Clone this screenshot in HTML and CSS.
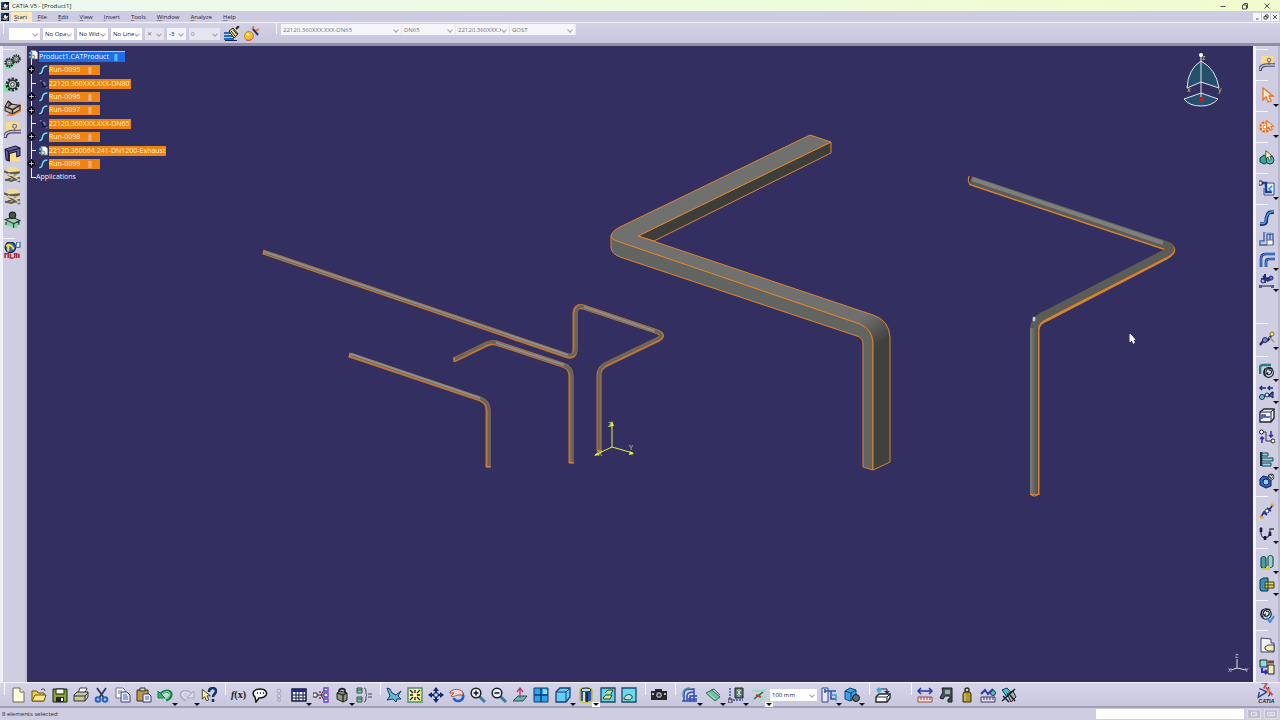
FILE: index.html
```html
<!DOCTYPE html>
<html lang="en">
<head>
<meta charset="utf-8">
<title>CATIA V5 - [Product1]</title>
<link rel="stylesheet" href="styles.css">
</head>
<body>
<svg class="defs" aria-hidden="true">
  <defs>
    <symbol id="app" viewBox="0 0 16 16"><path d="M0 0h16v16H0z" fill="#10162a"/><path d="M0 0h7L3 6v8H0z" fill="#1d4f78"/><path d="M5 6l4-3 2 4 4-2-3 6-4 1z" fill="#e8f3f8"/><path d="M3 10l5 0 3 4H5z" fill="#e08a2c"/><path d="M9 12l5-1v4h-4z" fill="#3a75b0"/></symbol>
    <symbol id="gear" viewBox="0 0 16 16"><circle cx="8" cy="8" r="6" fill="none" stroke="#26332f" stroke-width="3" stroke-dasharray="2.500 1.300"/><circle cx="8" cy="8" r="4.600" fill="#b9c8c4" stroke="#26332f" stroke-width="1.500"/><circle cx="8" cy="8" r="2" fill="#e9eef2" stroke="#26332f"/></symbol>
    <symbol id="run" viewBox="0 0 16 16"><path d="M2 14c7 1 4-5 6-8 1-4 3-4 7-4" fill="none" stroke="#0d3b63" stroke-width="4"/><path d="M2 13.500c6 1 4-5 6-8 1-3 3-4 7-4" fill="none" stroke="#7fd4ee" stroke-width="2.400"/></symbol>
    <symbol id="part" viewBox="0 0 16 16"><path d="M5 1h7l3 3v10H5z" fill="#fff" stroke="#9fb6d6"/><circle cx="4" cy="5" r="2.500" fill="#5fb2ea" stroke="#1b4b8f"/><circle cx="8" cy="11" r="3" fill="#efe27a" stroke="#1b4b8f"/><circle cx="3" cy="11" r="1.500" fill="#7ac7ef"/></symbol>
    <symbol id="spec" viewBox="0 0 16 16"><path d="M3 3h3M8 6h3v4M12 14h3" fill="none" stroke="#8fa0e8" stroke-width="1.600"/><path d="M5 4l3 8 5 1" fill="none" stroke="#14123c" stroke-width="2"/></symbol>
    <symbol id="node" viewBox="0 0 16 16"><path d="M8 1l7 7-7 7-7-7z" fill="#0b0b12" stroke="#0b0b12" stroke-width="2" stroke-linejoin="round"/><path d="M8 4v8M4 8h8" stroke="#e6e6f0" stroke-width="1.400"/><path d="M15 8h1" stroke="#fff"/></symbol>
    <symbol id="conveyor" viewBox="0 0 16 16"><circle cx="8" cy="6" r="6.500" fill="#f5dc8e"/><path d="M0 4l5 2 10-1M1 12l6 1 8-3M2 6l13 8M14 5L2 13" fill="none" stroke="#5f5f57" stroke-width="2"/><path d="M0 6l6 2 9-1M2 14l6 1 7-3M4 6l10 6" fill="none" stroke="#d6d6cc"/></symbol>
    <symbol id="pipebend" viewBox="0 0 16 16"><path d="M2 0h12v9H2z" fill="#f9dc85"/><path d="M1 15c0-4 3-6 7-6h8" fill="none" stroke="#4f4a6c" stroke-width="3.600"/><path d="M1 14c0-3 3-5 7-5h8" fill="none" stroke="#c2c4dc" stroke-width="1.500"/><circle cx="10" cy="4" r="1.800" fill="#ddd6e8" stroke="#6c6280"/><path d="M10 6v3" stroke="#6c6280"/></symbol>
    <symbol id="swirl" viewBox="0 0 16 16"><circle cx="8" cy="8" r="6" fill="#d8e4ea" stroke="#161a28" stroke-width="1.300"/><path d="M8 5c4-1 5 3 2 5s-6-1-5-4 5-4 8-3M8 8c-2 0-2 3 1 3M4 3c-2 3-1 7 1 9" fill="none" stroke="#161a28" stroke-width="1.300"/></symbol>
    <symbol id="disk" viewBox="0 0 16 16"><path d="M1 2h14v13H1z" fill="#8aa33d" stroke="#1a2010"/><path d="M4 2h8v5H4z" fill="#f3f5ea" stroke="#1a2010"/><path d="M4 10h8v5H4z" fill="#20261a"/><path d="M9 11h2v3H9z" fill="#fff"/></symbol>
    <symbol id="arrow" viewBox="0 0 16 16"><path d="M4 1v12l3-3 2 5 3-1-2-5h4z"/></symbol>
  </defs>
</svg>

<div class="window">
<header class="titlebar">
  <svg class="appicon"><use href="#app"/></svg>
  <h1 class="title">CATIA V5 - [Product1]</h1>
  <div class="wincontrols">
    <button aria-label="Minimize"><svg viewBox="0 0 8 8"><path d="M1.500 4.500h5"/></svg></button>
    <button aria-label="Restore"><svg viewBox="0 0 8 8"><path d="M1.500 3h4v4h-4zM3 3V1.500h3.500V6H5.500"/></svg></button>
    <button aria-label="Close"><svg viewBox="0 0 8 8"><path d="M1.500 1.500l5 5M6.500 1.500l-5 5"/></svg></button>
  </div>
</header>

<nav class="menubar" aria-label="Main menu">
  <svg class="appicon"><use href="#app"/></svg>
  <button class="menu active"><u>S</u>tart</button>
  <button class="menu"><u>F</u>ile</button>
  <button class="menu"><u>E</u>dit</button>
  <button class="menu"><u>V</u>iew</button>
  <button class="menu"><u>I</u>nsert</button>
  <button class="menu"><u>T</u>ools</button>
  <button class="menu"><u>W</u>indow</button>
  <button class="menu"><u>A</u>nalyze</button>
  <button class="menu"><u>H</u>elp</button>
  <div class="childcontrols">
    <button aria-label="Minimize document"><svg viewBox="0 0 8 8"><path d="M3 6h2.500"/></svg></button>
    <button aria-label="Restore document"><svg viewBox="0 0 8 8"><path d="M2 3.500h3V6H2zM3.500 3.500V2H6v3H5"/></svg></button>
    <button aria-label="Close document"><svg viewBox="0 0 8 8"><path d="M2 2l4 4M6 2L2 6"/></svg></button>
  </div>
</nav>

<div class="optionbar" role="toolbar" aria-label="Graphic properties">
  <div class="set">
    <span class="combo"><select aria-label="Fill color"><option></option></select></span>
    <span class="combo"><select aria-label="Opacity"><option>No Opa</option></select></span>
    <span class="combo"><select aria-label="Line width"><option>No Wid</option></select></span>
    <span class="combo"><select aria-label="Line type"><option>No Line</option></select></span>
    <span class="combo small off"><select aria-label="Point symbol"><option>✕</option></select></span>
    <span class="combo small tint"><select aria-label="Rendering style"><option>-3</option></select></span>
    <span class="combo off"><select aria-label="Layer"><option>0</option></select></span>
    <button class="tool wide" aria-label="Painter"><svg viewBox="0 0 16 16"><path d="M0 7h9M0 10h9M0 13h10" stroke="#2167c9" stroke-width="2"/><path d="M1 14.500h12" stroke="#15205a"/><path d="M5 5l4-3 5 6-4 4z" fill="#e9e28a" stroke="#27270f"/><path d="M7 5l4 5M9 3.500l4 5" stroke="#27270f"/><path d="M12 3l3-3" stroke="#27270f" stroke-width="2"/></svg></button>
    <button class="tool wide" aria-label="Wizard"><svg viewBox="0 0 16 16"><circle cx="5" cy="10" r="4.500" fill="#f4c12c" stroke="#c9831d"/><circle cx="4" cy="8.500" r="1.500" fill="#fff2a0"/><path d="M2 14c3 1 5 0 7-2" stroke="#cc4e9b" fill="none"/><path d="M8 3l2-3M11 5l4-2" stroke="#e07a2a" stroke-width="1.500"/><path d="M9 3l5 6" stroke="#26306a" stroke-width="2"/></svg></button>
  </div>
  <div class="set spec">
    <span class="combo w120 off"><select aria-label="Specification"><option>22120.360XXX.XXX-DN65</option></select></span>
    <span class="combo w54 off"><select aria-label="Nominal size"><option>DN65</option></select></span>
    <span class="combo w54 off"><select aria-label="Line ID"><option>22120.360XXX.X(</option></select></span>
    <span class="combo w66 off"><select aria-label="Standard"><option>GOST</option></select></span>
  </div>
</div>

<div class="work">
<aside class="side left" role="toolbar" aria-label="Workshop">
  <div class="vgroup">
    <button class="tool" aria-label="Components"><svg viewBox="0 0 16 16"><path d="M0 15l7-7 8 0-9 7z" fill="#8fdcb0"/><use href="#gear" x="0" y="4" width="10" height="10"/><use href="#gear" x="7" y="1" width="9" height="9"/></svg></button>
    <button class="tool" aria-label="Mechanism"><svg viewBox="0 0 16 16"><path d="M0 15V7l14 1-8 7z" fill="#8fdcb0"/><use href="#gear" x="1" y="1" width="14" height="14"/></svg></button>
    <button class="tool" aria-label="Assembly"><svg viewBox="0 0 16 16"><path d="M8 10l8-6v8l-8 4H2z" fill="#e98a3c"/><path d="M1 7l3-5 4 3 7 1v4l-7 4-7-3z" fill="#c8beb2" stroke="#2b241f"/><path d="M1 7l7 3 7-4M8 10v4" fill="none" stroke="#2b241f" stroke-width="1.500"/><path d="M4 2l3 3-3 2" fill="#7a6d62" stroke="#2b241f"/></svg></button>
    <button class="tool" aria-label="Piping"><svg><use href="#pipebend"/></svg></button>
    <button class="tool short" aria-label="Duct"><svg viewBox="0 0 16 16"><path d="M3 7h12v8H3z" fill="#f7dc8a"/><path d="M1 4l10-3 4 2v7l-3 1V6L5 8v7l-3-1z" fill="#6a68a0" stroke="#16163a"/><path d="M1 4l3 2 11-3M4 6v9" fill="none" stroke="#16163a"/></svg></button>
    <button class="tool short" aria-label="Conveyor"><svg><use href="#conveyor"/></svg></button>
    <button class="tool short" aria-label="Tray"><svg><use href="#conveyor"/></svg></button>
    <button class="tool short" aria-label="Equipment"><svg viewBox="0 0 16 16"><path d="M0 13l4-7 12 3-4 7z" fill="#7fd3a8"/><path d="M1 8l7-2 7 3-6 3zM2 10v3M14 10v3M9 12v4" fill="#a8c6b6" stroke="#26382f"/><circle cx="8" cy="4" r="3" fill="#48524d" stroke="#1b211e"/></svg></button>
  </div>
  <div class="vgroup">
    <button class="tool" aria-label="Catalog"><svg viewBox="0 0 16 16"><circle cx="6" cy="5" r="5" fill="#2d5fd0" stroke="#10163a"/><path d="M2 4c3-3 6 0 7 3M4 9V3" fill="none" stroke="#f0dc3c" stroke-width="2"/><path d="M12 0h3v5h-4z" fill="#fff" stroke="#2b4bb0"/><path d="M1 15v-4h3v4m2-4v4h3m1 0v-4h2v4m2 0v-4" fill="none" stroke="#b82b3a" stroke-width="1.500"/></svg></button>
  </div>
</aside>

<main class="viewport">
  <svg class="scene" viewBox="27 46 1226 636" role="img" aria-label="Pipe and duct runs in 3D">
    <defs>
      <linearGradient id="bend" gradientUnits="userSpaceOnUse" x1="866" y1="314" x2="884" y2="341"><stop offset="0" stop-color="#70706e"/><stop offset=".3" stop-color="#646563"/><stop offset="1" stop-color="#40413d"/></linearGradient>
      <linearGradient id="tube" gradientUnits="userSpaceOnUse" x1="1030" y1="0" x2="1039" y2="0"><stop offset="0" stop-color="#7b7f7c"/><stop offset=".4" stop-color="#666865"/><stop offset="1" stop-color="#4b4c46"/></linearGradient>
    </defs>
    <g class="duct">
      <path d="M831 142V153L654 241L638 236Z" fill="#3d3e3a"/>
      <path d="M611 236V248Q612 254 620 257L857 336Q863 338 863 344V467L873 470V342Q872 329 860 324L617 241Q611 239 611 236Z" fill="#626461"/>
      <path d="M810 135L831 142L638 236L873 315Q889 320 890 337V462L873 470V342Q872 329 860 324L617 241Q611 239 611 236Q612 231 620 227Z" fill="url(#bend)"/>
    </g>
    <g class="pipe">
      <path class="rim" d="M263 252L568 356Q575 357 575 350V313Q576 305 583 307L655 331Q667 335 657 340L605 365Q599 369 599 375V451"/>
      <path class="rim" d="M349 355L480 399Q488 402 488 410V467"/>
      <path class="rim" d="M454 360L487 344Q491 342 496 343L563 365Q571 368 571 376V463"/>
      <path class="shell" d="M264 252L568 355Q575 356 576 350V313Q577 305 583 307L655 331Q666 335 657 339L605 364Q599 368 599 375V450"/>
      <path class="shell" d="M350 354L480 398Q488 401 489 410V466"/>
      <path class="shell" d="M455 359L487 343Q491 341 496 343L563 365Q571 368 572 376V462"/>
      <path class="shine" d="M265 252L568 355M584 307L655 331M351 354L480 398M496 343L564 365"/>
      <path class="cap" d="M264 250v4M350 353v4M454 358v4M486 467h5M569 463h5M597 451h5"/>
    </g>
    <g class="mainpipe">
      <path class="rim" d="M971 181L1163 245Q1178 249 1164 256L1046 317Q1035 321 1035 330V495"/>
      <path class="shell" d="M971 180L1163 244Q1177 248 1164 254L1045 315Q1034 320 1034 329V494"/>
      <path d="M1030 328H1038V494H1030Z" fill="url(#tube)"/>
      <path class="shine" d="M972 179L1163 243"/>
      <ellipse class="glint" cx="1034" cy="319" rx="1.500" ry="2.500"/>
      <path class="cap" d="M969 176Q967 181 970 185M1030 494Q1034 498 1039 494"/>
    </g>
    <g class="origin">
      <path d="M612 447V424M612 447L633 453M612 447L595 455"/>
      <path class="tip" d="M612 421l2 5h-4zM634 454l-5 1 1-4zM594 456l4-4 1 3z"/>
      <text x="608" y="427">Z</text><text x="629" y="450">Y</text><text x="598" y="456">X</text>
    </g>
    <g class="compass">
      <path d="M1201 61Q1188 69 1187 88L1201 82L1219 88Q1216 69 1201 61Z"/>
      <path d="M1184 99L1201 93L1218 99Q1212 106 1201 106Q1189 106 1184 99Z"/>
      <path d="M1201 56V99"/>
      <circle cx="1201" cy="55" r="2"/>
      <rect x="1199" y="97" width="5" height="5"/>
      <text x="1202" y="60">z</text><text x="1187" y="92">x</text><text x="1218" y="92">y</text>
    </g>
    <g class="triad">
      <path d="M1237 659V668L1231 670M1237 668L1246 670"/>
      <text x="1235" y="658">Z</text><text x="1228" y="672">X</text><text x="1245" y="672">Y</text>
    </g>
    <path class="pointer" d="M1130 334v8l2-2 1.500 3.500 1-1-1.500-3h2z"/>
  </svg>
  <ul class="tree">
    <li class="root"><svg><use href="#part"/></svg><span class="label picked">Product1.CATProduct<i>||</i></span></li>
    <li class="run"><svg class="node"><use href="#node"/></svg><svg><use href="#run"/></svg><span class="label">Run-0095<i>||</i></span></li>
    <li><svg><use href="#spec"/></svg><span class="label">22120.360XXX.XXX-DN80</span></li>
    <li class="run"><svg class="node"><use href="#node"/></svg><svg><use href="#run"/></svg><span class="label">Run-0096<i>||</i></span></li>
    <li class="run"><svg class="node"><use href="#node"/></svg><svg><use href="#run"/></svg><span class="label">Run-0097<i>||</i></span></li>
    <li><svg><use href="#spec"/></svg><span class="label">22120.360XXX.XXX-DN65</span></li>
    <li class="run"><svg class="node"><use href="#node"/></svg><svg><use href="#run"/></svg><span class="label">Run-0098<i>||</i></span></li>
    <li><svg><use href="#part"/></svg><span class="label">22120.360064.241-DN1200-Exhaust</span></li>
    <li class="run"><svg class="node"><use href="#node"/></svg><svg><use href="#run"/></svg><span class="label">Run-0099<i>||</i></span></li>
    <li class="apps"><span>Applications</span></li>
  </ul>
</main>

<aside class="side right" role="toolbar" aria-label="Piping design">
  <div class="vgroup"><button class="tool" aria-label="Piping Design"><svg><use href="#pipebend"/></svg></button></div>
  <div class="vgroup"><button class="tool more" aria-label="Select"><svg viewBox="0 0 16 16"><use href="#arrow" fill="#fbe7d2" stroke="#e2762b" stroke-width="1.300"/></svg></button></div>
  <div class="vgroup"><button class="tool more" aria-label="Select filter"><svg viewBox="0 0 16 16"><circle cx="6" cy="9" r="4.500" fill="#fbe7d2" stroke="#e2762b" stroke-width="2.500" stroke-dasharray="2.500 1"/><circle cx="6" cy="9" r="2" fill="#fff" stroke="#e2762b"/><use href="#arrow" x="5" y="1" width="11" height="13" fill="#fbe7d2" stroke="#e2762b" stroke-width="1.500"/></svg></button></div>
  <div class="vgroup"><button class="tool" aria-label="Pick object"><svg viewBox="0 0 16 16"><path d="M1 9l4-3 4 2v5l-4 2-4-2z" fill="#35a7a0" stroke="#143c3c"/><circle cx="11" cy="11" r="4" fill="#4fc0b8" stroke="#143c3c"/><use href="#arrow" x="4" y="0" width="11" height="13" fill="#f5f0b8" stroke="#222"/></svg></button></div>
  <div class="vgroup"><button class="tool more" aria-label="Route"><svg viewBox="0 0 16 16"><path d="M8 3h7v12H5V8" fill="#e9effa" stroke="#3a4b86"/><path d="M1 3h6v9h6" fill="none" stroke="#173f9c" stroke-width="2.500"/><path d="M0 1h3v4H0z" fill="#fff" stroke="#222"/><path d="M13 6l-3 3 3 3" fill="none" stroke="#2b8fd2" stroke-width="1.500"/></svg></button></div>
  <div class="vgroup gapafter">
    <button class="tool" aria-label="Route a run"><svg viewBox="0 0 16 16"><path d="M1 14c9 1 5-4 7-8 1-4 3-4 7-4" fill="none" stroke="#0c2a78" stroke-width="3.600"/><path d="M1 13.500c8 1 5-4 7-8 1-3 3-4 7-4" fill="none" stroke="#49a2ee" stroke-width="1.500"/></svg></button>
    <button class="tool" aria-label="Route from element"><svg viewBox="0 0 16 16"><path d="M5 1v9H1v4h7M8 3h6v11M8 3v7M11 3v6" fill="none" stroke="#3d5da8" stroke-width="1.400"/><path d="M8 9h6v5H8z" fill="#fff" stroke="#5e6b80"/><path d="M1 11h4M6 2h8" stroke="#74b9d8"/></svg></button>
    <button class="tool more" aria-label="Offset run"><svg viewBox="0 0 16 16"><path d="M2 15V7c0-4 2-5 5-5h9" fill="none" stroke="#102c86" stroke-width="2.600"/><path d="M7 15v-5c0-2 1-3 3-3h6" fill="none" stroke="#102c86" stroke-width="2.600"/><path d="M2 15V7c0-4 2-5 5-5h9M7 15v-5c0-2 1-3 3-3h6" fill="none" stroke="#59b1f0"/></svg></button>
    <button class="tool more" aria-label="Branch"><svg viewBox="0 0 16 16"><path d="M6 1v9M2 6l9-1M4 3l5 5M8 8l4-2" stroke="#222a70" stroke-width="2"/><circle cx="12" cy="5" r="2" fill="#5c77d8" stroke="#222a70"/><circle cx="4" cy="8" r="2" fill="#9fb2f2" stroke="#222a70"/><path d="M1 13h13" stroke="#1c2038"/><path d="M0 12h3v3H0zM12 12h3v3h-3z" fill="#4a58b0"/></svg></button>
  </div>
  <div class="vgroup single"><button class="tool more" aria-label="Place part"><svg viewBox="0 0 16 16"><path d="M1 14l4-5h4l3-4" fill="none" stroke="#222a54" stroke-width="2.400"/><circle cx="6" cy="9" r="2.500" fill="#7688d8" stroke="#222a54"/><circle cx="13" cy="3" r="2" fill="#f2e582" stroke="#77733a"/><path d="M10 6l5 5" stroke="#a1a05d" stroke-width="1.500"/></svg></button></div>
  <div class="vgroup">
    <button class="tool more" aria-label="Rotate"><svg viewBox="0 0 16 16"><path d="M1 11V5c0-3 2-3 4-3h7" fill="none" stroke="#267c84" stroke-width="2.600"/><use href="#swirl" x="3" y="3" width="13" height="13"/></svg></button>
    <button class="tool more" aria-label="Align"><svg viewBox="0 0 16 16"><path d="M1 3h6M3 1L1 3l2 2M9 3h5M11 1L9 3l2 2" fill="none" stroke="#182c80" stroke-width="1.400"/><path d="M2 13l5-3 3 1 4-4" fill="none" stroke="#173058" stroke-width="2"/><circle cx="3" cy="12" r="2.500" fill="#6cc4d8" stroke="#173058"/><circle cx="8" cy="10" r="2" fill="#dbe3ff" stroke="#173058"/><path d="M10 10l4-3v6z" fill="#4b64d0" stroke="#15194a"/></svg></button>
    <button class="tool" aria-label="Group box"><svg viewBox="0 0 16 16"><path d="M1 5l4-3h10v9l-3 4H1z" fill="#f4f5fa" stroke="#23263c" stroke-width="1.400"/><path d="M1 5h11v10M12 5l3-3" fill="none" stroke="#23263c"/><path d="M3 12V8h3v2H4M7 10h4" fill="none" stroke="#2c48b4" stroke-width="1.600"/></svg></button>
    <button class="tool" aria-label="Connect"><svg viewBox="0 0 16 16"><path d="M4 3h3v9h5" fill="none" stroke="#30343f"/><circle cx="2.500" cy="3" r="2" fill="#fff" stroke="#222"/><circle cx="14" cy="12" r="2" fill="#fff" stroke="#222"/><path d="M3 14V8M1 10l2-2 2 2M12 2v6M10 6l2 2 2-2" fill="none" stroke="#3328c2" stroke-width="1.500"/></svg></button>
    <button class="tool more" aria-label="Report"><svg viewBox="0 0 16 16"><path d="M2 1v14" stroke="#222c3a" stroke-width="2"/><path d="M3 2h6v3H3zM3 7h11v3H3zM3 12h9v3H3z" fill="#8adbe0" stroke="#1c3e50"/></svg></button>
    <button class="tool more" aria-label="Snapshot"><svg viewBox="0 0 16 16"><path d="M1 6l3-3 8 2v8l-5 2-6-3z" fill="#2c65c8" stroke="#131d50"/><circle cx="7" cy="9" r="3" fill="#8fd0ee" stroke="#131d50"/><use href="#swirl" x="8" y="0" width="8" height="8"/></svg></button>
  </div>
  <div class="vgroup">
    <button class="tool" aria-label="Curve"><svg viewBox="0 0 16 16"><path d="M2 14l3-5 5-2 4-5" fill="none" stroke="#1c2460" stroke-width="1.500"/><path d="M1 13l3 2M12 1l3 2" stroke="#d8a92c" stroke-width="2.400"/><path d="M4 9l4 3M8 5l4 3" stroke="#26328c" stroke-width="1.600"/><circle cx="8" cy="8" r="2" fill="#fff" stroke="#26328c"/></svg></button>
    <button class="tool more" aria-label="Flexible"><svg viewBox="0 0 16 16"><path d="M2 2v6c0 3 2 5 4 5s4-2 5-5V4h4" fill="none" stroke="#3b4460" stroke-width="1.300"/><path d="M2 3v4M6 11v4M11 7v4" stroke="#151a3c" stroke-width="2.600"/></svg></button>
  </div>
  <div class="vgroup">
    <button class="tool more" aria-label="Vessels"><svg viewBox="0 0 16 16"><path d="M2 3c1-2 4-2 5 0v9c-1 2-4 2-5 0z" fill="#3ea3ad" stroke="#12343c"/><path d="M9 2c1-2 4-2 5 0v9c-1 2-4 2-5 0z" fill="#9ad2ca" stroke="#12343c"/><path d="M2 14h8v-3" fill="none" stroke="#d6c83c" stroke-width="2"/></svg></button>
    <button class="tool more" aria-label="Fittings"><svg viewBox="0 0 16 16"><path d="M1 3l3-2h5v13H2L1 12z" fill="#358fc0" stroke="#12343c"/><path d="M6 5h9v6H6z" fill="#e5d94c" stroke="#3a3a14"/><path d="M6 8h9M9 5v6" stroke="#3a3a14"/></svg></button>
  </div>
  <div class="vgroup"><button class="tool" aria-label="Update"><svg viewBox="0 0 16 16"><use href="#swirl" x="0" y="0" width="14" height="14"/><path d="M8 11l3 4 4-6" fill="none" stroke="#3a8de0" stroke-width="2"/></svg></button></div>
  <div class="vgroup">
    <button class="tool" aria-label="Document note"><svg viewBox="0 0 16 16"><path d="M2 1l10 1v4h3v9H2z" fill="#f1f2f8" stroke="#43475a"/><path d="M6 10l3-2h6v6H9l-3-2z" fill="#f6ecae" stroke="#43475a"/></svg></button>
    <button class="tool" aria-label="Replace"><svg viewBox="0 0 16 16"><path d="M1 1h7v7H1z" fill="#8adbe0" stroke="#222"/><path d="M9 6h6v9H9z" fill="#f3ecb6" stroke="#222"/><path d="M9 3h6" stroke="#8c3b3b" stroke-width="3"/><path d="M3 9v4h5M6 11l2 2-2 2" fill="none" stroke="#2a2ac8" stroke-width="2"/></svg></button>
  </div>
</aside>
</div>

<div class="toolbar" role="toolbar" aria-label="Standard">
  <div class="group narrow">
    <button class="tool" aria-label="New"><svg viewBox="0 0 16 16"><path d="M3 1h7l4 4v10H3z" fill="#ffffe0" stroke="#6a6a55"/><path d="M10 1v4h4" fill="#fff" stroke="#6a6a55"/></svg></button>
    <button class="tool" aria-label="Open"><svg viewBox="0 0 16 16"><path d="M1 14V4h5l1 2h6v8z" fill="#f2cf48" stroke="#6b5412"/><path d="M1 14l3-6h11l-2 6z" fill="#fbe988" stroke="#6b5412"/><path d="M10 3c2-2 4-1 4 1" fill="none" stroke="#3a3416"/></svg></button>
    <button class="tool" aria-label="Save"><svg><use href="#disk"/></svg></button>
    <button class="tool" aria-label="Print"><svg viewBox="0 0 16 16"><path d="M5 6l2-5h7l-2 5z" fill="#fff" stroke="#444"/><path d="M1 8l3-3h11v5l-3 4H1z" fill="#c4c6b2" stroke="#33352a"/><path d="M1 9h11l3-3M12 9v5" fill="none" stroke="#33352a"/><path d="M3 12h6" stroke="#d8c840" stroke-width="1.500"/></svg></button>
    <button class="tool" aria-label="Cut"><svg viewBox="0 0 16 16"><path d="M3 1l7 10M12 1L5 11" stroke="#333a56" stroke-width="1.800"/><circle cx="4" cy="12.500" r="2.300" fill="none" stroke="#1f62c4" stroke-width="2"/><circle cx="11" cy="12.500" r="2.300" fill="none" stroke="#1f62c4" stroke-width="2"/></svg></button>
    <button class="tool" aria-label="Copy"><svg viewBox="0 0 16 16"><path d="M1 1h7l2 2v8H1z" fill="#fff" stroke="#6b7090"/><path d="M6 5h6l3 3v7H6z" fill="#e5eaff" stroke="#3b437e"/><path d="M8 8h4M8 10h5M8 12h5M3 4h4M3 6h2" stroke="#5065ba"/></svg></button>
    <button class="tool" aria-label="Paste"><svg viewBox="0 0 16 16"><path d="M1 3h11v11H1z" fill="#ba9c46" stroke="#3c3214"/><path d="M4 1h5v3H4z" fill="#d4d4d4" stroke="#333"/><path d="M7 7h6l2 2v6H7z" fill="#eef0ff" stroke="#333c70"/><path d="M9 10h4M9 12h4" stroke="#4a60ae"/></svg></button>
    <button class="tool more" aria-label="Undo"><svg viewBox="0 0 16 16"><path d="M2 9c4-6 11-6 12-2 0 3-2 5-5 6" fill="none" stroke="#128048" stroke-width="3.200"/><path d="M3 9c4-5 9-6 10-2 0 3-2 4-4 5" fill="none" stroke="#74dc9c" stroke-width="1.200"/><path d="M1 4v7h7z" fill="#39b06d" stroke="#128048"/></svg></button>
    <button class="tool more" aria-label="Redo" disabled><svg viewBox="0 0 16 16"><path d="M14 9C10 3 3 3 2 7c0 3 2 5 5 6" fill="none" stroke="#a9a7bd" stroke-width="2.600"/><path d="M13 9C10 4 4 4 3 7c0 3 2 4 4 5" fill="none" stroke="#e6e5f0" stroke-width="1.200"/><path d="M15 4v7H8z" fill="#dedde9" stroke="#a9a7bd"/></svg></button>
    <button class="tool" aria-label="What's this"><svg viewBox="0 0 16 16"><use href="#arrow" x="-2" y="1" width="13" height="14" fill="#f4ef9c" stroke="#222"/><path d="M8 5c0-5 7-5 7-1 0 3-3 3-3 6M12 12v3" fill="none" stroke="#132f68" stroke-width="2.500"/></svg></button>
  </div>
  <div class="group narrow">
    <button class="tool text" aria-label="Formula"><em>f</em>(x)</button>
    <button class="tool" aria-label="Comment"><svg viewBox="0 0 16 16"><path d="M3 10C-1 6 2 2 8 2s9 5 4 8c-2 1-3 1-5 1l-3 4z" fill="#f8f8ff" stroke="#151515" stroke-width="1.500"/><path d="M5 6h1M8 6h1M11 6h1" stroke="#111" stroke-width="1.500"/></svg></button>
    <button class="tool slim" aria-label="Check" disabled><svg viewBox="0 0 16 16"><circle cx="8" cy="4" r="2" fill="#d4d3e2" stroke="#a6a4ba"/><circle cx="8" cy="9" r="2" fill="#d4d3e2" stroke="#a6a4ba"/><circle cx="8" cy="13" r="1.500" fill="#d4d3e2" stroke="#a6a4ba"/></svg></button>
    <button class="tool more" aria-label="Design table"><svg viewBox="0 0 16 16"><path d="M1 2h14v12H1z" fill="#eff1ff" stroke="#15193c" stroke-width="1.500"/><path d="M1 2h14v3H1z" fill="#1c2a90"/><path d="M1 8h14M1 11h14M5 5v9M8 5v9M12 5v9" stroke="#15193c"/></svg></button>
    <button class="tool" aria-label="Structure"><svg viewBox="0 0 16 16"><path d="M4 8h4M8 8l3-5M8 8h3M8 8l3 5" fill="none" stroke="#333"/><path d="M0 6h4v4H0z" fill="#fff" stroke="#222"/><path d="M11 1h4v3h-4zM11 6h4v4h-4zM11 12h4v3h-4z" fill="#fff" stroke="#5a3fc8" stroke-width="1.300"/><path d="M6 4h2v2H6zM6 10h2v2H6z" fill="#b9447a"/></svg></button>
    <button class="tool more" aria-label="Lock"><svg viewBox="0 0 16 16"><path d="M5 7V4c0-3 6-3 6 0v3" fill="none" stroke="#26262a" stroke-width="1.800"/><path d="M3 6l3-2 7 2v7l-4 2-6-3z" fill="#8d9682" stroke="#1e201a"/><path d="M3 6l6 2 4-2M9 8v7" fill="none" stroke="#1e201a" stroke-width="1.300"/></svg></button>
    <button class="tool" aria-label="Equivalent"><svg viewBox="0 0 16 16"><path d="M1 1h5v5H1zM1 10h5v5H1z" fill="#7ecaa0" stroke="#345545"/><path d="M1 3h5M1 12h5" stroke="#345545"/><path d="M8 1c3 0 1 6 3 7-2 1 0 7-3 7M12 7h4M12 10h4" fill="none" stroke="#45464f"/></svg></button>
  </div>
  <div class="group">
    <button class="tool" aria-label="Fly mode"><svg viewBox="0 0 16 16"><path d="M1 1l3 1 2 4 4 2 5-4-3 5 3 3-4 0-1 3-3-3-6 1 3-4z" fill="#62b9d4" stroke="#183c60"/></svg></button>
    <button class="tool" aria-label="Fit all"><svg viewBox="0 0 16 16"><path d="M1 1h14v14H1z" fill="#fbf79a" stroke="#4c8e72" stroke-width="1.500"/><path d="M3 3l3 3M13 3l-3 3M3 13l3-3M13 13l-3-3M8 3v3M8 10v3M3 8h3M10 8h3" fill="none" stroke="#1a1a1a" stroke-width="1.300"/></svg></button>
    <button class="tool" aria-label="Pan"><svg viewBox="0 0 16 16"><path d="M8 1v14M1 8h14" stroke="#122b6c" stroke-width="2"/><path d="M8 0l3 4H5zM8 16l3-4H5zM0 8l4-3v6zM16 8l-4-3v6z" fill="#122b6c"/><path d="M6 6h4v4H6z" fill="#cfe5fb" stroke="#122b6c"/></svg></button>
    <button class="tool" aria-label="Rotate view"><svg viewBox="0 0 16 16"><path d="M13 6c3 4 0 8-4 8-3 0-4-2-4-3" fill="none" stroke="#2b5fc0" stroke-width="2.600"/><path d="M1 5c3-3 9-4 13 0v3H9c-3 0-4 3-7 1l3-3H1z" fill="#f3d9d0" stroke="#a14d4d"/></svg></button>
    <button class="tool" aria-label="Zoom in"><svg viewBox="0 0 16 16"><path d="M9 9l6 6" stroke="#3e78a8" stroke-width="3"/><circle cx="6" cy="6" r="4.800" fill="#eef6fb" stroke="#191e30" stroke-width="1.500"/><path d="M3.500 6h5M6 3.500v5" stroke="#111" stroke-width="1.500"/></svg></button>
    <button class="tool" aria-label="Zoom out"><svg viewBox="0 0 16 16"><path d="M9 9l6 6" stroke="#3e78a8" stroke-width="3"/><circle cx="6" cy="6" r="4.800" fill="#eef6fb" stroke="#191e30" stroke-width="1.500"/><path d="M3.500 6h5" stroke="#111" stroke-width="1.500"/></svg></button>
    <button class="tool" aria-label="Normal view"><svg viewBox="0 0 16 16"><path d="M1 14l5-5h9l-4 5z" fill="#6cb6b8" stroke="#234c58"/><path d="M8 11V2M5 5l3-4 3 4" fill="none" stroke="#b03c64" stroke-width="1.300"/></svg></button>
    <button class="tool" aria-label="Multi-view"><svg viewBox="0 0 16 16"><path d="M1 1h14v14H1z" fill="#2aa5ec" stroke="#123a74"/><path d="M8 1v14M1 8h14" stroke="#123a74" stroke-width="1.500"/><path d="M10 2l4 1v4h-4z" fill="#8fe0f6"/></svg></button>
    <button class="tool more" aria-label="Isometric view"><svg viewBox="0 0 16 16"><path d="M1 5l4-4h10v9l-4 5H1z" fill="#64cdf8" stroke="#1c3c70" stroke-width="1.300"/><path d="M1 5h10v10M11 5l4-4" fill="none" stroke="#1c3c70"/></svg></button>
    <button class="tool more lit" aria-label="Shading with edges"><svg viewBox="0 0 16 16"><path d="M2 3c0-3 12-3 12 0v10c0 3-12 3-12 0z" fill="#2c55b0" stroke="#c8c040" stroke-width="1.600"/><ellipse cx="8" cy="3" rx="5" ry="2" fill="#b8dce8" stroke="#222"/><path d="M6 5v10" stroke="#dfe6a0" stroke-width="2"/><path d="M9 5v10" stroke="#111a3a" stroke-width="1.500"/></svg></button>
    <button class="tool" aria-label="Hide or show"><svg viewBox="0 0 16 16"><path d="M1 1h14v14H1z" fill="#62d2e6" stroke="#1b4961" stroke-width="1.300"/><path d="M3 11l3-3h6l-2 4H4z" fill="#dfe47c" stroke="#33412f"/><path d="M5 6l3-3h5l-2 4" fill="#b7e6a5" stroke="#33412f"/></svg></button>
    <button class="tool" aria-label="Swap visible space"><svg viewBox="0 0 16 16"><path d="M1 1h14v14H1z" fill="#62dcf0" stroke="#1b4961" stroke-width="1.300"/><path d="M3 12c0-4 6-6 8-3 1 3-2 5-8 3z" fill="#c2dfd4" stroke="#33412f"/></svg></button>
  </div>
  <div class="group">
    <button class="tool" aria-label="Capture"><svg viewBox="0 0 16 16"><path d="M0 4h4V2h7v2h5v9H0z" fill="#24262c"/><circle cx="8" cy="8" r="3.500" fill="#a8b0ba" stroke="#0c0d10"/><circle cx="8" cy="8" r="1.500" fill="#32384a"/><path d="M1 7h2M13 7h2" stroke="#f0f0f0" stroke-width="1.500"/></svg></button>
  </div>
  <div class="group">
    <button class="tool more" aria-label="Spool"><svg viewBox="0 0 16 16"><path d="M2 14V7c0-5 4-5 10-5v13M5 14V9c0-3 2-4 7-4M8 15V9h7M0 14h15M6 12h9" fill="none" stroke="#344eb0" stroke-width="1.500"/><path d="M1 10V7c0-4 3-6 7-6" fill="none" stroke="#3c9da4" stroke-width="1.500"/></svg></button>
    <button class="tool more" aria-label="Plane"><svg viewBox="0 0 16 16"><path d="M1 6l6-3 8 7-5 4z" fill="#72c49e" stroke="#2a6a58"/><path d="M6 3l3-1 6 6" fill="none" stroke="#2a6a58"/><path d="M3 6l7 6" stroke="#aee9cc"/></svg></button>
    <button class="tool more" aria-label="Work area"><svg viewBox="0 0 16 16"><path d="M2 1v12h13" fill="none" stroke="#2f4cc0" stroke-width="1.400" stroke-dasharray="2 1"/><path d="M0 12h4v4H0z" fill="#cdb1dc" stroke="#333"/><path d="M7 1h8v10H7z" fill="#58776f" stroke="#1b2724"/><path d="M9 3l4 5M13 3L9 8M11 2v8" stroke="#d1e5da"/></svg></button>
    <button class="tool more lit" aria-label="Snap"><svg viewBox="0 0 16 16"><path d="M1 4h11M4 10L15 2M1 14L14 4M8 15l7-6" fill="none" stroke="#98dcc4" stroke-width="2"/><path d="M3 12l9-7" stroke="#285e4c" stroke-width="1.200"/><path d="M5 8l5 2" stroke="#c03b30" stroke-width="2"/></svg></button>
    <span class="combo grid"><select aria-label="Grid step"><option>100 mm</option></select></span>
    <button class="tool more" aria-label="Measure frame"><svg viewBox="0 0 16 16"><path d="M1 1h6v14H1z" fill="#e6e9f6" stroke="#3a458a"/><path d="M4 4h11M4 2v4M10 4v8h5" fill="none" stroke="#2954bc" stroke-width="1.600"/><path d="M10 8h5v6" fill="none" stroke="#38a2b2" stroke-width="1.500"/></svg></button>
    <button class="tool more" aria-label="Solid box"><svg viewBox="0 0 16 16"><path d="M1 4l5-3 6 2v8l-6 3-5-2z" fill="#38a4e2" stroke="#123c80"/><path d="M1 4l6 2 5-3M7 6v8" fill="none" stroke="#123c80"/><circle cx="12" cy="11" r="3.500" fill="#646c78" stroke="#15181e"/></svg></button>
  </div>
  <div class="group wideend">
    <button class="tool" aria-label="Transfer"><svg viewBox="0 0 16 16"><path d="M1 10l3-3h11v4l-3 4H1z" fill="#fff" stroke="#23262c" stroke-width="1.400"/><path d="M1 10h11l3-3M12 10v5M6 2h6v3" fill="none" stroke="#23262c"/><path d="M9 4h6l-3 3z" fill="#1c2c7c"/><circle cx="4" cy="3" r="2.500" fill="#4ea9d0"/></svg></button>
  </div>
  <div class="group">
    <button class="tool" aria-label="Measure between"><svg viewBox="0 0 16 16"><path d="M1 4h14M4 1L1 4l3 3M12 1l3 3-3 3" fill="none" stroke="#2533a8" stroke-width="1.500"/><path d="M1 10h14v5H1z" fill="#f9dcd3" stroke="#944c4a"/><path d="M4 10v3M7 10v3M10 10v3M13 10v3" stroke="#944c4a"/></svg></button>
    <button class="tool" aria-label="Measure item"><svg viewBox="0 0 16 16"><path d="M4 1h10v14h-4v-3h2V9H7l-2 3-3-1 3-6z" fill="#4d565e" stroke="#14181c"/><path d="M7 3h5v4H7z" fill="#8fb6aa"/></svg></button>
    <button class="tool" aria-label="Measure inertia"><svg viewBox="0 0 16 16"><circle cx="8" cy="3" r="2" fill="none" stroke="#38300c" stroke-width="1.400"/><path d="M5 5h6l1 2v8H4V7z" fill="#a99a2a" stroke="#38300c"/><path d="M6 7v7" stroke="#e2d674"/></svg></button>
    <button class="tool" aria-label="Clearance"><svg viewBox="0 0 16 16"><path d="M1 10h14v5H1z" fill="#e9d9e6" stroke="#3e3c78"/><path d="M4 10v3M7 10v3M10 10v3M13 10v3" stroke="#3e3c78"/><path d="M1 7l4-4 3 4 5-5" fill="none" stroke="#2b3aa8" stroke-width="2"/><circle cx="13" cy="6" r="2.500" fill="#51bfc2" stroke="#173c4c"/></svg></button>
    <button class="tool" aria-label="Clash"><svg viewBox="0 0 16 16"><path d="M1 3l5-2 4 4-4 5z" fill="#43c1d4" stroke="#163850"/><path d="M6 7l6-3 3 6-5 5z" fill="#a7adaf" stroke="#222"/><path d="M1 14l13-12M2 9l6 6M9 8l5 6" stroke="#1b1f28" stroke-width="1.500"/></svg></button>
  </div>
  <svg class="brand" viewBox="0 0 20 20" role="img" aria-label="CATIA"><path d="M5 0h5L7 5" fill="none" stroke="#d63c50" stroke-width="1.500"/><path d="M3 5l7 3-8 5 1-5M12 4c-4 1 4 5-1 8" fill="none" stroke="#273882" stroke-width="1.200"/><path d="M9 4l6 7" stroke="#dc3d54" stroke-width="1.600"/><path d="M10 9l3-4" stroke="#e99b36" stroke-width="1.600"/><text x="2" y="18">CATIA</text></svg>
</div>

<footer class="status">
  <span class="message">8 elements selected</span>
  <input type="text" aria-label="Power input">
  <button aria-label="Power input dialog"><svg viewBox="0 0 14 8"><path d="M4 2h6v4H4zM8 2v2h2"/></svg></button>
  <button aria-label="Dialog panel"><svg viewBox="0 0 14 8"><path d="M3 2h8v4H3zM6 2v4M8 2v4"/></svg></button>
</footer>
</div>
</body>
</html>
```
FILE: styles.css
```css
* { box-sizing: border-box; }
html, body { height: 100%; }
body { margin: 0; font: 7px/10px "Open Sans", "Noto Sans", sans-serif; color: #26263a; background: #cfcde2; }
button { font: inherit; color: inherit; border: 0; padding: 0; background: none; }
svg { display: block; fill: none; }
.defs { position: absolute; width: 0; height: 0; }
.window { display: flex; flex-direction: column; height: 100vh; overflow: hidden; }

/* Title and menus */
.titlebar { display: flex; align-items: center; height: 11px; background: linear-gradient(90deg, #edf9ef, #edfbe1 45%, #f2fbcf); }
.appicon { width: 8px; height: 8px; margin: 0 2px 0 1px; flex: none; }
.title { margin: 0 0 0 1px; font-size: 6px; font-weight: 400; color: #222; }
.wincontrols { margin-left: auto; display: flex; gap: 14px; padding-right: 9px; }
.wincontrols svg, .childcontrols svg { width: 8px; height: 8px; stroke: #50534c; stroke-width: 1; }
.menubar { display: flex; align-items: center; height: 11px; background: #cecce3; }
.menu { font-size: 6px; font-weight: 400; line-height: 10px; padding: 0 6px 0 5px; color: #1c1b34; }
.menu:first-of-type { padding: 0 5px 0 3px; }
.menu.active { background: #fbe8bd; }
.menu u { text-underline-offset: 1px; text-decoration-thickness: 1px; text-decoration-color: #8886a0; }
.childcontrols { margin-left: auto; display: flex; gap: 1px; padding-right: 1px; }
.childcontrols button { background: #f4f4f9; }

/* Property bar */
.optionbar { display: flex; align-items: flex-start; height: 24px; border-top: 1px solid #f3f2fa; border-bottom: 3px solid #918fa4; background: linear-gradient(#d3d1e7, #c8c6dd); }
.set { display: flex; align-items: center; gap: 3px; padding: 2px 0 0 6px; margin-left: 3px; height: 20px; background: linear-gradient(#f4f4fb, #f4f4fb) 0 0 / 1px 11px no-repeat; }
.set.spec { margin-left: 16px; padding: 1px 0 0 5px; gap: 0; align-items: flex-start; }
.combo { position: relative; display: block; width: 31px; height: 12px; background: #fff; }
.combo select { appearance: none; display: block; width: 100%; height: 100%; border: 0; border-radius: 0; padding: 0 8px 0 2px; background: none; font: 6px/12px "Open Sans", "Noto Sans", sans-serif; color: #24242e; }
.combo::after { content: ""; position: absolute; right: 3px; top: 4px; width: 3px; height: 3px; border: solid #a3a3ae; border-width: 0 1px 1px 0; transform: rotate(45deg); pointer-events: none; }
.combo.small { width: 19px; background: #e9e8f2; }
.combo.tint { background: #f3f3f9; }
.combo.off { background: #e6e5ef; }
.combo.off select { color: #777783; }
.combo.w120 { width: 121px; }
.combo.w54 { width: 54px; }
.combo.w66 { width: 66px; }
.spec .combo { background: #f4f4f9; height: 11px; border-right: 1px solid #e6e5ef; }
.combo.grid { width: 47px; }

/* Tool buttons */
.tool { position: relative; display: flex; align-items: center; justify-content: center; width: 21px; height: 21px; flex: none; }
.tool > svg { width: 16px; height: 16px; }
.tool.wide { width: 17px; height: 18px; }
.tool.slim { width: 18px; }
.tool.more::after { content: ""; position: absolute; right: -2px; bottom: -1px; border: solid transparent; border-width: 3px 3px 0; border-top-color: #111; }
.tool.lit::before { content: ""; position: absolute; right: -3px; bottom: -2px; width: 8px; height: 5px; background: #fff; }
.tool.text { font: bold 10px/14px "Liberation Serif", serif; color: #17172a; }

/* Work area */
.work { display: flex; flex: 1; min-height: 0; }
.side { display: flex; flex-direction: column; width: 27px; padding-top: 3px; flex: none; background: #cfcde2; }
.side.left { border-left: 3px solid #eeeef7; border-right: 2px solid #c1bfd5; }
.side.right { border-left: 3px solid #f6f6fc; border-right: 2px solid #bab8cf; }
.vgroup { display: flex; flex-direction: column; align-items: flex-start; gap: 1px; padding: 4px 0 5px; background: linear-gradient(#f5f4fb, #f5f4fb) 0 0 / 12px 1px no-repeat; }
.left .vgroup { gap: 0; padding: 1px 0 8px; }
.left .tool { width: 19px; height: 23px; }
.left .tool.short { height: 22px; }
.left .tool > svg { width: 17px; height: 17px; }
.right .tool { height: 22px; }
.right .vgroup:nth-child(n+6) .tool { height: 21px; }
.right .vgroup.gapafter { gap: 0; padding: 3px 0 32px; }
.right .vgroup.single { padding: 5px 0 7px; }
.viewport { position: relative; flex: 1; min-width: 0; overflow: hidden; background: #333061; }
.scene { position: absolute; inset: 0; width: 100%; height: 100%; }

/* Specification tree */
.tree { position: relative; display: flex; flex-direction: column; width: max-content; height: 134px; margin: 4px 0 0 4px; padding: 0; list-style: none; color: #f1effa; }
.tree::before { content: ""; position: absolute; left: 0; top: 8px; bottom: 7px; width: 1px; background: #f1effa; }
.tree li { position: relative; flex: 1; display: flex; align-items: center; padding-left: 7px; gap: 1px; }
.tree li::before { content: ""; position: absolute; left: 0; top: 6px; width: 5px; height: 1px; background: #f1effa; }
.tree li svg { width: 10px; height: 10px; flex: none; }
.tree li .node { position: absolute; left: -4px; top: 2px; width: 9px; height: 9px; z-index: 1; }
.tree .root { padding-left: 0; }
.tree .root svg { margin: -4px 0 0 -3px; }
.tree .root::before { display: none; }
.tree .label { line-height: 10px; background: #f08411; color: #fff1d8; padding-right: 1px; white-space: nowrap; }
.tree .label i { font: 7px/10px "Liberation Sans", sans-serif; padding: 0 8px; }
.tree .picked { background: #1c6ee8; color: #e8f2ff; border-top: 1px solid #a8cdfb; }
.tree .label.picked i { padding: 0 6px 0 5px; }
.tree .run .label { width: 51px; }
.tree .apps { padding-left: 5px; }

/* 3D scene */
.duct path { stroke: #dc842e; stroke-width: 1; stroke-linejoin: round; }
.rim { stroke: #bd7636; stroke-width: 5; }
.shell { stroke: #66645d; stroke-width: 3; }
.shine { stroke: #918e87; stroke-width: 2; }
.cap { stroke: #e98b3c; stroke-width: 1; }
.mainpipe .rim { stroke: #d8822f; stroke-width: 9; }
.mainpipe .shell { stroke: #5b5c57; stroke-width: 8; }
.mainpipe .shine { stroke: #7d7f7c; stroke-width: 4; }
.glint { fill: #c4cbc8; }
.origin path { stroke: #e6ee3c; stroke-width: 1; }
.origin .tip { fill: #e6ee3c; stroke: none; }
.origin text { fill: #d8e05a; font-size: 7px; }
.compass path { fill: #24506b; stroke: #e4e2f2; stroke-width: 1; }
.compass circle { fill: #fff; }
.compass rect { fill: #d3121c; }
.compass text { fill: #d9cf5c; font-size: 7px; }
.triad path { stroke: #dddbea; stroke-width: 1; }
.triad text { fill: #dddbea; font-size: 6px; }
.pointer { fill: #fff; stroke: #e8e8f0; stroke-width: 1; }

/* Bottom tool bar */
.toolbar { display: flex; align-items: flex-start; height: 26px; border-top: 1px solid #f2f1fa; border-bottom: 2px solid #a19fb4; background: linear-gradient(#d6d4e9, #c9c7dd); padding-left: 4px; }
.group { display: flex; align-items: center; padding: 1px 6px 0 3px; background: linear-gradient(#f7f6fc, #f7f6fc) 0 0 / 1px 12px no-repeat; }
.group.wideend { padding-right: 18px; }
.toolbar .tool.more { width: 23px; }
.toolbar .narrow .tool.more { width: 22px; }
.brand { width: 22px; height: 22px; margin: 0 2px 0 auto; }
.brand text { font: italic bold 5px "Liberation Sans", sans-serif; fill: #28234e; }

/* Status line */
.status { display: flex; align-items: center; gap: 3px; height: 12px; padding: 0 2px; font-size: 6px; background: #cfcde2; }
.status .message { flex: 1; }
.status input { width: 148px; height: 10px; border: 0; padding: 0 2px; background: #fff; font: inherit; }
.status button { width: 14px; height: 10px; background: #c1bfcd; border: 1px solid #dedde8; }
.status svg { width: 12px; height: 8px; stroke: #eeeef5; }
```
